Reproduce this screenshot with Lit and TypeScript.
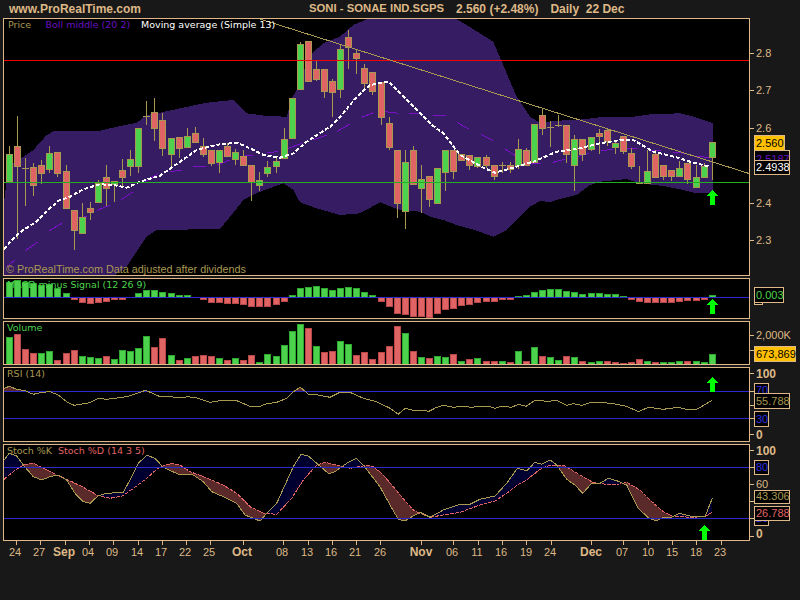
import { LitElement, html, svg, css } from "lit";
import { customElement } from "lit/decorators.js";

type C = [number, number, number, number, number, string];
type B = [number, number, string];
type P = [number, number];

// All data is given in 3x coordinates of the picture; divide by 3 when drawn.
const CANDLES: C[] = [
  [28,438,463,543,543,"g"],[52,348,438,497,718,"r"],[76,475,505,505,618,"d"],[100,490,502,554,587,"r"],
  [124,480,496,518,551,"r"],[148,438,460,507,518,"g"],[172,457,457,518,530,"r"],[199,495,514,623,623,"r"],
  [223,631,631,689,749,"r"],[247,610,652,700,700,"g"],[271,606,625,635,659,"r"],[295,540,548,607,607,"g"],
  [319,495,532,563,618,"r"],[343,544,544,551,605,"g"],[367,478,511,530,558,"r"],[391,450,478,499,528,"g"],
  [415,385,385,497,518,"g"],[439,304,349,349,375,"d"],[463,295,337,383,422,"r"],[487,340,361,443,467,"r"],
  [515,415,415,461,497,"g"],[539,412,412,443,473,"r"],[563,385,408,440,440,"g"],[587,381,400,427,427,"r"],
  [611,415,438,461,470,"r"],[635,451,451,488,497,"r"],[659,451,451,485,518,"g"],[683,430,439,467,470,"r"],
  [707,447,457,476,494,"g"],[731,450,467,494,497,"r"],[755,496,496,547,603,"r"],[779,517,541,556,573,"g"],
  [803,484,502,518,530,"g"],[829,468,484,497,518,"g"],[853,385,418,473,473,"g"],[877,295,295,413,413,"g"],
  [901,127,133,266,266,"g"],[925,124,124,244,244,"r"],[949,184,208,236,244,"r"],[973,208,208,272,293,"r"],
  [997,238,244,275,350,"r"],[1021,133,148,266,293,"g"],[1045,91,112,142,207,"r"],[1069,150,160,174,221,"r"],
  [1093,193,205,248,270,"r"],[1117,217,217,272,284,"r"],[1144,245,245,350,374,"r"],[1168,350,370,440,451,"r"],
  [1192,450,450,608,653,"r"],[1216,450,487,632,687,"g"],[1240,438,450,551,551,"r"],[1264,495,538,563,640,"g"],
  [1288,529,529,596,620,"r"],[1312,505,505,608,608,"g"],[1336,451,451,515,572,"g"],[1360,451,451,512,537,"r"],
  [1384,463,463,479,479,"r"],[1408,466,466,494,509,"r"],[1432,472,472,497,505,"g"],[1459,466,472,494,505,"r"],
  [1483,496,496,527,540,"r"],[1507,485,497,497,518,"d"],[1531,485,496,506,518,"r"],[1555,418,448,496,506,"g"],
  [1579,445,451,496,497,"r"],[1603,373,373,485,490,"g"],[1627,328,346,383,404,"r"],[1651,363,383,383,440,"d"],
  [1675,346,375,375,382,"d"],[1699,376,376,461,490,"r"],[1723,405,418,496,572,"g"],[1747,418,418,461,482,"r"],
  [1774,412,412,446,452,"g"],[1798,388,400,407,461,"r"],[1822,388,390,422,437,"r"],[1846,422,430,440,461,"g"],
  [1870,409,409,452,461,"r"],[1894,445,460,499,506,"r"],[1918,497,550,550,552,"d"],[1942,449,514,550,550,"g"],
  [1966,449,463,530,530,"r"],[1990,496,496,527,540,"r"],[2014,511,511,527,542,"r"],[2038,484,505,527,527,"g"],
  [2062,490,490,537,551,"r"],[2089,496,532,560,560,"g"],[2113,490,499,530,530,"g"],[2137,427,427,472,540,"g"],
];

const UPPER: P[] = [[12,605],[20,540],[40,490],[100,450],[140,405],[165,392],[300,392],[360,378],[410,368],[440,345],[480,338],[540,325],[620,308],[700,300],[740,340],[800,348],[860,350],[875,295],[890,270],[930,165],[970,130],[1020,110],[1060,75],[1100,58],[1370,58],[1400,75],[1480,125],[1520,220],[1550,290],[1590,350],[1620,368],[1670,362],[1730,360],[1800,352],[1900,350],[1950,343],[2040,340],[2080,350],[2140,370]];
const LOWER: P[] = [[2140,580],[2090,580],[2050,570],[1990,558],[1920,550],[1880,537],[1800,545],[1770,555],[1730,585],[1690,594],[1650,606],[1620,603],[1590,620],[1550,660],[1520,690],[1480,710],[1430,692],[1370,675],[1330,660],[1290,650],[1260,635],[1200,630],[1140,607],[1080,640],[1020,645],[950,625],[900,607],[880,570],[850,550],[780,575],[730,600],[690,650],[660,687],[470,690],[440,710],[410,755],[380,800],[345,826],[12,826]];
const MA: P[] = [[12,748],[40,715],[70,690],[110,665],[150,625],[175,602],[210,590],[250,568],[300,553],[340,555],[380,563],[420,545],[480,527],[540,485],[590,450],[650,434],[710,428],[750,445],[790,465],[840,473],[880,460],[920,425],[990,380],[1030,340],[1070,290],[1110,255],[1165,245],[1200,280],[1208,288],[1260,340],[1300,378],[1330,400],[1380,465],[1450,503],[1485,518],[1540,503],[1600,485],[1670,455],[1730,447],[1800,430],[1860,420],[1900,420],[1960,455],[2030,472],[2080,488],[2130,500]];
const MID: [number,number,number,number][] = [[20,800,45,780],[75,752,115,725],[148,692,185,670],[220,655,260,650],[290,632,330,615],[362,600,400,575],[435,545,475,520],[510,515,545,510],[580,500,620,498],[650,495,690,480],[720,470,760,465],[800,458,835,455],[865,445,905,430],[940,420,980,405],[1010,395,1050,372],[1085,352,1120,338],[1155,335,1195,340],[1228,340,1260,340],[1300,346,1337,346],[1372,368,1408,388],[1443,403,1480,422],[1516,448,1552,470],[1588,490,1624,490],[1660,487,1696,477],[1732,470,1768,460],[1804,452,1840,448],[1876,446,1912,444],[1948,450,1984,452],[2020,456,2056,460],[2092,470,2130,472]];

const MACD: B[] = [[28,35,"g"],[52,30,"g"],[76,35,"g"],[100,38,"g"],[124,45,"g"],[148,42,"g"],[172,55,"g"],[199,70,"g"],[223,88,"r"],[247,95,"r"],[271,98,"r"],[295,95,"r"],[319,92,"r"],[343,88,"r"],[367,86,"r"],[415,70,"g"],[439,60,"g"],[463,60,"g"],[487,67,"g"],[515,70,"g"],[539,76,"g"],[563,76,"g"],[611,88,"r"],[635,95,"r"],[659,95,"r"],[683,98,"r"],[707,98,"r"],[731,101,"r"],[755,107,"r"],[779,107,"r"],[803,107,"r"],[829,101,"r"],[853,92,"r"],[877,76,"g"],[901,55,"g"],[925,52,"g"],[949,48,"g"],[973,55,"g"],[997,61,"g"],[1021,55,"g"],[1045,52,"g"],[1069,55,"g"],[1093,67,"g"],[1117,76,"g"],[1144,92,"r"],[1168,107,"r"],[1192,130,"r"],[1216,133,"r"],[1240,137,"r"],[1264,137,"r"],[1288,140,"r"],[1312,130,"r"],[1336,116,"r"],[1360,113,"r"],[1384,104,"r"],[1408,101,"r"],[1432,95,"r"],[1459,92,"r"],[1483,92,"r"],[1507,86,"r"],[1531,86,"r"],[1555,78,"g"],[1579,76,"g"],[1603,67,"g"],[1627,61,"g"],[1651,58,"g"],[1675,58,"g"],[1699,64,"g"],[1723,67,"g"],[1747,73,"g"],[1774,70,"g"],[1798,70,"g"],[1822,73,"g"],[1846,73,"g"],[1870,78,"g"],[1894,86,"r"],[1918,92,"r"],[1942,95,"r"],[1966,95,"r"],[1990,95,"r"],[2014,95,"r"],[2038,92,"r"],[2062,89,"r"],[2089,89,"r"],[2113,87,"r"],[2137,76,"g"]];
const VOL: B[] = [[28,202,"g"],[52,193,"r"],[76,238,"r"],[100,250,"r"],[124,250,"g"],[148,244,"g"],[172,271,"r"],[199,250,"r"],[223,241,"r"],[247,259,"g"],[271,262,"g"],[295,265,"g"],[319,259,"r"],[343,268,"g"],[367,241,"g"],[391,244,"g"],[415,235,"g"],[439,199,"g"],[463,232,"r"],[487,205,"r"],[515,256,"g"],[539,271,"r"],[563,265,"g"],[587,259,"r"],[611,256,"r"],[635,259,"r"],[659,265,"g"],[683,271,"r"],[707,265,"g"],[731,271,"r"],[755,256,"r"],[779,277,"g"],[803,253,"g"],[829,259,"g"],[853,226,"g"],[877,184,"g"],[901,163,"g"],[925,175,"r"],[949,229,"g"],[973,247,"r"],[997,244,"r"],[1021,214,"g"],[1045,223,"g"],[1069,256,"r"],[1093,247,"r"],[1117,268,"r"],[1144,247,"r"],[1168,229,"r"],[1192,169,"r"],[1216,190,"g"],[1240,244,"r"],[1264,262,"g"],[1288,265,"r"],[1312,259,"g"],[1336,262,"g"],[1360,253,"r"],[1384,274,"g"],[1408,268,"r"],[1432,265,"g"],[1459,274,"r"],[1483,274,"r"],[1507,274,"g"],[1531,277,"r"],[1555,244,"g"],[1579,274,"r"],[1603,232,"g"],[1627,259,"r"],[1651,262,"g"],[1675,271,"g"],[1699,259,"r"],[1723,262,"g"],[1747,274,"r"],[1774,277,"g"],[1798,274,"g"],[1822,274,"r"],[1846,277,"r"],[1870,280,"r"],[1894,277,"r"],[1918,268,"r"],[1942,274,"g"],[1966,277,"r"],[1990,277,"g"],[2014,277,"g"],[2038,274,"g"],[2062,274,"r"],[2089,274,"g"],[2113,277,"g"],[2137,253,"g"]];
const RSI: P[] = [[12,355],[28,349],[50,358],[75,362],[100,373],[125,367],[150,365],[175,375],[200,395],[222,406],[270,398],[295,385],[320,388],[380,380],[437,361],[480,380],[515,380],[535,384],[565,380],[590,384],[630,397],[660,392],[710,392],[750,409],[780,409],[800,401],[830,397],[860,385],[880,365],[901,352],[925,372],[950,374],[990,382],[1020,367],[1050,367],[1090,385],[1130,395],[1170,415],[1195,433],[1200,428],[1216,415],[1240,421],[1275,421],[1285,425],[1310,412],[1330,406],[1360,412],[1385,409],[1415,412],[1435,409],[1465,409],[1485,415],[1505,409],[1535,412],[1555,403],[1578,409],[1605,391],[1645,394],[1670,391],[1700,406],[1720,401],[1745,406],[1775,397],[1805,397],[1850,403],[1880,409],[1915,425],[1945,412],[1990,418],[2035,412],[2060,418],[2090,418],[2137,391]];
const K: P[] = [[12,90],[28,70],[50,78],[70,105],[100,140],[125,150],[150,140],[175,135],[200,150],[225,190],[250,215],[270,220],[295,197],[320,190],[370,187],[390,150],[415,100],[440,76],[465,85],[490,112],[540,135],[575,132],[610,155],[635,185],[670,200],[710,220],[735,255],[780,273],[800,250],[830,220],[855,165],[880,110],[903,73],[925,78],[950,100],[985,130],[1000,128],[1040,100],[1068,85],[1095,112],[1140,170],[1170,225],[1195,268],[1215,273],[1240,258],[1260,247],[1290,262],[1330,240],[1380,223],[1410,223],[1440,208],[1485,198],[1520,160],[1552,115],[1580,122],[1605,97],[1625,103],[1650,90],[1670,105],[1700,148],[1725,165],[1748,190],[1775,160],[1800,160],[1825,145],[1850,152],[1880,165],[1915,235],[1945,263],[1968,273],[1990,262],[2015,262],[2038,250],[2070,258],[2115,260],[2137,205]];
const D: P[] = [[12,148],[40,125],[70,105],[100,100],[125,112],[170,135],[205,150],[250,172],[295,197],[330,205],[370,197],[400,175],[440,145],[470,118],[490,108],[515,100],[540,105],[570,125],[610,140],[670,165],[710,190],[750,230],[790,250],[830,253],[875,205],[910,150],[950,105],[975,97],[1020,108],[1050,115],[1100,106],[1120,110],[1150,135],[1180,170],[1200,195],[1240,240],[1260,250],[1290,262],[1330,255],[1380,247],[1440,225],[1485,213],[1520,190],[1552,165],[1580,150],[1620,118],[1650,105],[1670,106],[1695,108],[1740,135],[1780,158],[1820,163],[1860,162],[1880,157],[1920,180],[1950,210],[1990,245],[2015,258],[2070,262],[2115,260],[2137,247]];

const TICKS: [string, number, boolean, number][] = [
  ["24",15,false,16],["27",39,false,40],["Sep",64,true,65],["04",88,false,89],["09",112,false,113],["14",137,false,138],["17",161,false,162],["22",185,false,186],["25",209,false,210],["Oct",242,true,243],["08",282,false,283],["13",307,false,308],["16",331,false,332],["21",355,false,356],["26",380,false,380],["Nov",421,true,421],["06",452,false,453],["11",477,false,478],["16",501,false,502],["19",526,false,526],["24",550,false,551],["Dec",591,true,591],["07",622,false,623],["10",648,false,648],["15",672,false,672],["18",696,false,696],["23",720,false,721],
];

const pts = (a: P[], yo = 0) => a.map(([x, y]) => `${(x / 3).toFixed(1)},${(yo + y / 3).toFixed(1)}`).join(" ");
const interp = (a: P[], x: number) => {
  for (let i = 0; i < a.length - 1; i++) {
    if (x >= a[i][0] && x <= a[i + 1][0]) {
      return a[i][1] + ((a[i + 1][1] - a[i][1]) * (x - a[i][0])) / (a[i + 1][0] - a[i][0]);
    }
  }
  return a[a.length - 1][1];
};

// Pixel columns between two curves: one whole-pixel rectangle per column, so no seams appear.
const column = (px: number, a: number, b: number) => {
  const t = Math.round(Math.min(a, b));
  const h = Math.round(Math.max(a, b)) - t;
  return h > 0 ? `M${px} ${t}h1v${h}h-1z` : "";
};

function stochFill() {
  let up = "", dn = "";
  for (let px = 4; px < 712; px++) {
    const z = px * 3 + 1.5;
    const yk = 430 + interp(K, z) / 3, yd = 430 + interp(D, z) / 3;
    const s = column(px, yk, yd);
    if (yk < yd) up += s; else dn += s;
  }
  return { up, dn };
}

function rsiFill() {
  let d = "";
  for (let px = 4; px < 712; px++) {
    const y = 270 + interp(RSI, px * 3 + 1.5) / 3;
    if (y < 391) d += column(px, y, 391);
  }
  return d;
}

const frame = (y0: number, y1: number) => svg`<rect class="frame" x="3.5" y=${y0} width="746" height=${y1 - y0}></rect>`;
const tick = (y: number) => svg`<line class="tick" x1="750" x2="754" y1=${y} y2=${y}></line>`;
const lab = (y: number, t: string, cls = "ax") => svg`<text class=${cls} x="756" y=${y}>${t}</text>`;
const box = (y0: number, y1: number, w: number, t: string, txt: string, fill = "boxk") => svg`
  <rect class=${fill} x="754.5" y=${y0 + 0.5} width=${w} height=${y1 - y0}></rect>
  <text class=${txt} x="756" y=${y1 - 3}>${t}</text>`;
const arrow = (cx: number, top: number) => svg`
  <polygon class="arrow" points="${cx},${top} ${cx + 6},${top + 6} ${cx + 2.5},${top + 6} ${cx + 2.5},${top + 15} ${cx - 2.5},${top + 15} ${cx - 2.5},${top + 6} ${cx - 6},${top + 6}"></polygon>`;

function bars(data: B[], y0: number, base: number) {
  return data.map(([x, z, c]) => {
    const cx = Math.floor(x / 3);
    const y = y0 + z / 3;
    const t = Math.round(Math.min(y, base));
    const h = Math.max(1, Math.round(Math.abs(base - y)));
    return svg`<rect class=${c === "g" ? "bg" : "br"} x=${cx - 3 + 0.5} y=${t + 0.5} width="6" height=${h}></rect>`;
  });
}

function candles() {
  return CANDLES.map(([x, hi, top, bot, lo, c]) => {
    const cx = Math.floor(x / 3) + 0.5;
    const wick = svg`<line class="wick" x1=${cx} x2=${cx} y1=${hi / 3} y2=${lo / 3}></line>`;
    if (c === "d") {
      const y = Math.floor(top / 3) + 0.5;
      return svg`${wick}<line class="wick" x1=${cx - 3.5} x2=${cx + 3.5} y1=${y} y2=${y}></line>`;
    }
    const t = Math.round(top / 3), b = Math.round(bot / 3);
    return svg`${wick}<rect class=${c === "g" ? "cg" : "cr"} x=${cx - 3} y=${t + 0.5} width="6" height=${Math.max(1, b - t)}></rect>`;
  });
}

@customElement("app-root")
export class AppRoot extends LitElement {
  static styles = css`
    :host { display: block; width: 800px; height: 600px; background: #181818; overflow: hidden; font-family: "Liberation Sans", Arial, sans-serif; }
    .head { display: flex; height: 17px; align-items: center; color: #deb887; font: bold 12px "Liberation Sans", Arial, sans-serif; white-space: pre; padding-left: 9px; padding-top: 1px; box-sizing: border-box; }
    .title { display: flex; gap: 12px; margin-left: 168px; }
    .sym { font-size: 11.3px; }
    svg { display: block; width: 800px; overflow: hidden; }
    svg * { shape-rendering: crispEdges; }
    .frame { fill: none; stroke: #deb887; stroke-width: 1; }
    .tick { stroke: #deb887; stroke-width: 1; }
    .wick { stroke: #a89850; stroke-width: 1; }
    .cg { fill: #4dd24d; stroke: #a89850; stroke-width: 1; }
    .cr { fill: #e06464; stroke: #a89850; stroke-width: 1; }
    .bg { fill: #4dd24d; stroke: #2fa82f; stroke-width: 1; }
    .br { fill: #e06464; stroke: #b84848; stroke-width: 1; }
    .band { fill: #361c62; stroke: none; }
    .ma { fill: none; stroke: #fff; stroke-width: 2; stroke-dasharray: 4 2; }
    .mid { stroke: #7a10c8; stroke-width: 1; fill: none; }
    .red { stroke: #f00000; stroke-width: 1; }
    .grn { stroke: #22b022; stroke-width: 1; }
    .trend { stroke: #a89850; stroke-width: 1; }
    .blue { stroke: #2a2acc; stroke-width: 1; }
    .rsi { fill: none; stroke: #a89850; stroke-width: 1; }
    .k { fill: none; stroke: #a89850; stroke-width: 1; }
    .d { fill: none; stroke: #e06464; stroke-width: 1; stroke-dasharray: 4 1; }
    .up { fill: #000030; }
    .dn { fill: #5a2a2a; }
    .arrow { fill: #00ff00; }
    text { font-family: "Liberation Sans", Arial, sans-serif; font-size: 11px; }
    .ax { fill: #deb887; }
    .axb { fill: #deb887; font-weight: bold; font-size: 12px; }
    .tl { fill: #deb887; font-size: 11px; text-anchor: middle; }
    .tb { fill: #deb887; font-size: 12px; font-weight: bold; text-anchor: middle; }
    .leg { font-family: "DejaVu Sans", sans-serif; font-size: 9.5px; }
    .lt { fill: #a89850; }
    .lp { fill: #6a10c0; }
    .lw { fill: #ffffff; }
    .lg { fill: #4dd24d; }
    .ls { fill: #e06464; }
    .foot { fill: #a89850; font-size: 10.8px; }
    .boxk { fill: #000; stroke: #deb887; stroke-width: 1; }
    .boxy { fill: #ffc000; stroke: #deb887; stroke-width: 1; }
    .tk { fill: #000; }
    .tw { fill: #fff; }
    .tp { fill: #6a10c0; }
    .tg { fill: #4dd24d; }
    .tt { fill: #a89850; }
    .tb2 { fill: #3030e0; }
    .tr { fill: #e06464; }
  `;

  render() {
    const { up, dn } = stochFill();
    const band = [...UPPER, ...LOWER];
    return html`
      <div class="head"><span>www.ProRealTime.com</span><span class="title"><span class="sym">SONI - SONAE IND.SGPS</span><span>2.560 (+2.48%)</span><span>Daily  22 Dec</span></span></div>

      <svg height="260" viewBox="0 17 800 260">
        <rect x="4" y="19" width="745" height="256" fill="#000"></rect>
        <polygon class="band" points=${pts(band)}></polygon>
        ${MID.map(([a, b, c, d]) => svg`<line class="mid" x1=${a / 3} y1=${b / 3} x2=${c / 3} y2=${d / 3}></line>`)}
        ${candles()}
        <polyline class="ma" points=${pts(MA)}></polyline>
        <line class="red" x1="4" x2="749" y1="60.5" y2="60.5"></line>
        <line class="grn" x1="4" x2="749" y1="182.5" y2="182.5"></line>
        <line class="trend" x1="260" y1="19" x2="749" y2="173.5"></line>
        ${arrow(712.5, 190)}
        <text class="leg lt" x="8" y="28">Price</text>
        <text class="leg lp" x="45.5" y="28">Boll middle (20 2)</text>
        <text class="leg lw" x="141" y="28">Moving average (Simple 13)</text>
        <text class="foot" x="6" y="273">© ProRealTime.com  Data adjusted after dividends</text>
        ${frame(18.5, 275.5)}
        ${tick(53.5)}${lab(57, "2.8")}
        ${tick(90.5)}${lab(94, "2.7")}
        ${tick(128.5)}${lab(132, "2.6")}
        ${tick(203.5)}${lab(207, "2.4")}
        ${tick(240.5)}${lab(244, "2.3")}
        ${box(150, 166, 35, "2.5187", "tp")}
        ${box(135, 150, 30, "2.560", "tk", "boxy")}
        ${box(160, 174, 35, "2.4938", "tw")}
      </svg>

      <svg height="43" viewBox="0 277 800 43">
        <rect x="4" y="279" width="745" height="39" fill="#000"></rect>
        ${bars(MACD, 270, 297)}
        <line class="blue" x1="4" x2="749" y1="297.5" y2="297.5"></line>
        ${arrow(712.5, 299)}
        <text class="leg lg" x="7" y="288">MACD minus Signal (12 26 9)</text>
        ${frame(278.5, 318.5)}
        <rect class="boxk" x="754.5" y="296.5" width="8" height="8"></rect>
        ${box(287, 302, 29, "0.003", "tg")}
      </svg>

      <svg height="46" viewBox="0 320 800 46">
        <rect x="4" y="322" width="745" height="42" fill="#000"></rect>
        ${bars(VOL, 270, 364)}
        <text class="leg lg" x="7" y="331">Volume</text>
        ${frame(321.5, 364.5)}
        ${tick(335.5)}${lab(339, "2,000K")}
        ${tick(350.5)}
        ${box(346, 361, 41, "673,869", "tk", "boxy")}
      </svg>

      <svg height="77" viewBox="0 366 800 77">
        <rect x="4" y="368" width="745" height="73" fill="#000"></rect>
        <path class="dn" d=${rsiFill()}></path>
        <line class="blue" x1="4" x2="749" y1="391.5" y2="391.5"></line>
        <line class="blue" x1="4" x2="749" y1="418.5" y2="418.5"></line>
        <polyline class="rsi" points=${pts(RSI, 270)}></polyline>
        ${arrow(712.5, 377)}
        <text class="leg lt" x="7" y="377">RSI (14)</text>
        ${frame(367.5, 441.5)}
        ${tick(373.5)}<text class="axb" x="756" y="378">100</text>
        ${tick(391.5)}
        ${box(383, 397, 14, "70", "tb2")}
        ${tick(405.5)}
        ${box(393, 408, 35, "55.788", "tt")}
        ${tick(418.5)}
        ${box(411, 426, 14, "30", "tb2")}
        ${tick(434.5)}<text class="axb" x="756" y="439">0</text>
      </svg>

      <svg height="98" viewBox="0 443 800 98">
        <rect x="4" y="445" width="745" height="95" fill="#000"></rect>
        <path class="up" d=${up}></path>
        <path class="dn" d=${dn}></path>
        <polyline class="d" points=${pts(D, 430)}></polyline>
        <polyline class="k" points=${pts(K, 430)}></polyline>
        <line class="blue" x1="4" x2="749" y1="467.5" y2="467.5"></line>
        <line class="blue" x1="4" x2="749" y1="518.5" y2="518.5"></line>
        ${arrow(704.5, 525)}
        <text class="leg lt" x="7" y="454">Stoch %K</text>
        <text class="leg ls" x="58" y="454">Stoch %D (14 3 5)</text>
        ${frame(444.5, 540.5)}
        ${tick(450.5)}<text class="axb" x="756" y="455">100</text>
        ${tick(467.5)}${box(460, 474, 14, "80", "tb2")}
        ${tick(484.5)}${lab(488, "60")}
        ${tick(501.5)}
        ${tick(518.5)}${box(514, 525, 14, "20", "tb2")}
        ${box(490, 503, 35, "43.306", "tt")}
        ${box(506, 520, 35, "26.788", "tr")}
        ${tick(536.5)}<text class="axb" x="756" y="538">0</text>
      </svg>

      <svg height="59" viewBox="0 541 800 59">
        ${TICKS.map(([t, x, b, tx]) => svg`
          <line class="tick" x1=${tx + 0.5} x2=${tx + 0.5} y1="541" y2="545"></line>
          <text class=${b ? "tb" : "tl"} x=${x} y="556">${t}</text>`)}
      </svg>
    `;
  }
}
